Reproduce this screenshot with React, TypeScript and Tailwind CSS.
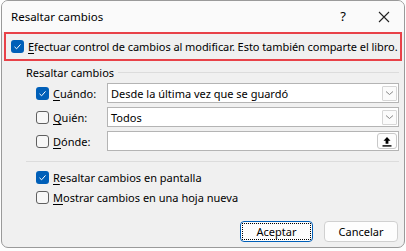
import React from "react";

const font = { fontFamily: '"Segoe UI", "Noto Sans", "Open Sans", sans-serif' };

function Check({ checked }: { checked: boolean }) {
  if (checked) {
    return (
      <div className="w-[13px] h-[13px] rounded-[3px] bg-[#005fb8] flex items-center justify-center shrink-0">
        <svg width="9" height="9" viewBox="0 0 9 9">
          <path d="M1.5 4.8 L3.6 6.8 L7.5 2.4" fill="none" stroke="white" strokeWidth="1" />
        </svg>
      </div>
    );
  }
  return <div className="w-[13px] h-[13px] rounded-[3px] border border-[#5f5f5f] bg-[#f7f7f7] shrink-0" />;
}

function Chevron() {
  return (
    <div className="w-[15px] h-[15px] border border-[#d6d6d6] bg-[#fbfbfb] rounded-[1px] flex items-center justify-center">
      <svg width="9" height="6" viewBox="0 0 9 6">
        <path d="M1 1.5 L4.5 4.5 L8 1.5" fill="none" stroke="#7a7a7a" strokeWidth="0.9" />
      </svg>
    </div>
  );
}

function U({ c }: { c: string }) {
  return <span className="underline underline-offset-[2px] decoration-[1px]">{c}</span>;
}

export default function App() {
  return (
    <div className="w-[406px] h-[251px] bg-[#fdfdfd] overflow-hidden text-[11px] leading-[15px] text-black" style={font}>
      <div className="ml-[1px] w-[404px] h-[248px] rounded-[7px] border border-[#9a9a9a] bg-[#f0f0f0] overflow-hidden flex flex-col">
        <div className="h-[31px] bg-[#fafafa] flex items-center pl-[9px] shrink-0">
          <span className="flex-1 text-[11.5px]">Resaltar cambios</span>
          <span className="w-[20px] text-center text-[13px] mr-[25px]">?</span>
          <svg width="12" height="12" viewBox="0 0 12 12" className="mr-[14px]">
            <path d="M1 1 L11 11 M11 1 L1 11" stroke="#222" strokeWidth="1.1" />
          </svg>
        </div>
        <div className="mx-[2px] h-[29px] border-2 border-[#e84148] flex items-center pl-[5px] gap-[4px] shrink-0">
          <Check checked />
          <span className="whitespace-nowrap tracking-[-0.06px]"><U c="E" />fectuar control de cambios al modificar. Esto también comparte el libro.</span>
        </div>
        <div className="pl-[24px] pr-[5px] pt-[3px] flex flex-col">
          <div className="flex items-center gap-[4px] h-[16px]">
            <span>Resaltar cambios</span>
            <div className="flex-1 h-px bg-[#dcdcdc]" />
          </div>
          <div className="pl-[10px] pt-[3px] flex flex-col gap-[4px]">
            <div className="flex items-center h-[20px]">
              <Check checked />
              <span className="w-[58px] pl-[4px]"><U c="C" />uándo:</span>
              <div className="flex-1 h-[20px] border border-[#b4b4b4] bg-white flex items-center pl-[3px] pr-[1px]">
                <span className="flex-1">Desde la última vez que se guardó</span>
                <Chevron />
              </div>
            </div>
            <div className="flex items-center h-[20px]">
              <Check checked={false} />
              <span className="w-[58px] pl-[4px]"><U c="Q" />uién:</span>
              <div className="flex-1 h-[20px] border border-[#b4b4b4] bg-white flex items-center pl-[3px] pr-[1px]">
                <span className="flex-1">Todos</span>
                <Chevron />
              </div>
            </div>
            <div className="flex items-center h-[20px]">
              <Check checked={false} />
              <span className="w-[58px] pl-[4px]"><U c="D" />ónde:</span>
              <div className="flex-1 h-[20px] border border-[#b4b4b4] bg-white flex items-center pl-[3px] pr-[1px] justify-end">
                <div className="w-[20px] h-[16px] border border-[#c8c8c8] rounded-[3px] bg-[#fdfdfd] flex items-center justify-center">
                  <svg width="10" height="11" viewBox="0 0 10 11">
                    <path d="M5 1 L1.5 4.8 L3.6 4.8 L3.6 7.8 L6.4 7.8 L6.4 4.8 L8.5 4.8 Z" fill="black" />
                    <rect x="0.5" y="9.2" width="9" height="1.4" fill="black" />
                  </svg>
                </div>
              </div>
            </div>
          </div>
          <div className="mt-[10px] h-px bg-[#dcdcdc]" />
          <div className="pl-[10px] pt-[7px] flex flex-col gap-[4px]">
            <div className="flex items-center h-[16px] gap-[4px]">
              <Check checked />
              <span><U c="R" />esaltar cambios en pantalla</span>
            </div>
            <div className="flex items-center h-[16px] gap-[4px]">
              <Check checked={false} />
              <span><U c="M" />ostrar cambios en una hoja nueva</span>
            </div>
          </div>
          <div className="flex justify-end gap-[11px] mt-[16px] pr-[1px]">
            <div className="w-[73px] h-[21px] rounded-[4px] border border-[#005fb8] bg-[#fdfdfd] p-[1px]">
              <div className="w-full h-full border border-dotted border-black flex items-center justify-center">Aceptar</div>
            </div>
            <div className="w-[74px] h-[21px] rounded-[4px] border border-[#d0d0d0] bg-[#fdfdfd] flex items-center justify-center">Cancelar</div>
          </div>
        </div>
      </div>
    </div>
  );
}
